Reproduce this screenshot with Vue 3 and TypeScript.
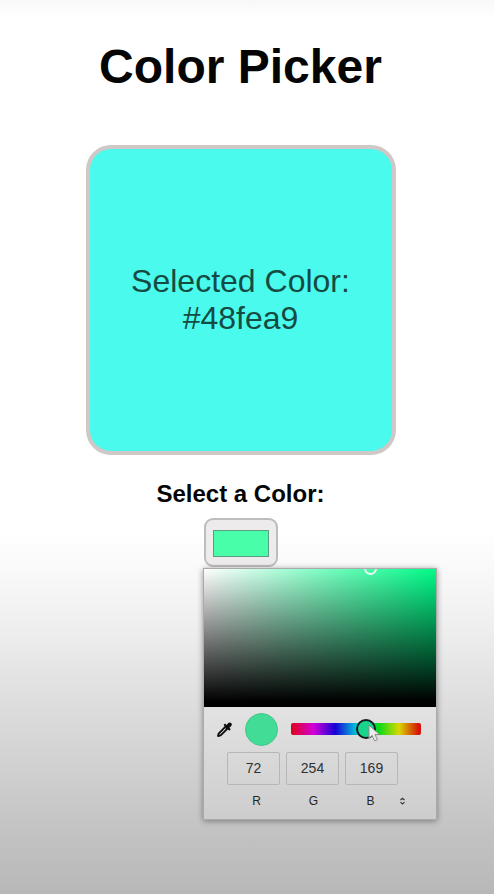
<script setup lang="ts">
import { ref } from 'vue'

interface Channel {
  name: string
  value: number
}

const selected = ref<string>('#48fea9')
const channels = ref<Channel[]>([
  { name: 'R', value: 72 },
  { name: 'G', value: 254 },
  { name: 'B', value: 169 },
])
</script>

<template>
  <main class="page">
    <div class="content">
      <h1 class="title">Color Picker</h1>
      <section class="display">
        <p>Selected Color:<br />{{ selected }}</p>
      </section>
      <h2 class="label">Select a Color:</h2>
      <div class="control">
        <button class="trigger" type="button"><span class="chip"></span></button>
        <div class="popup">
          <div class="palette"><i class="ring"></i></div>
          <div class="tools">
            <svg class="dropper" viewBox="0 0 18 18">
              <path d="M2.2 15.9l.6-2.6 7-7.1 2.1 2.1-7 7z" fill="none" stroke="#0c0c0c" stroke-width="2" stroke-linejoin="round" />
              <path d="M8 4.2l1.5-1.5 1.7 1.5 1.6-1.8q1.6-1.7 3.3-.2 1.6 1.7-.1 3.3L14.2 7.1l1.4 1.6-1.5 1.5z" fill="#0c0c0c" />
            </svg>
            <span class="dot"></span>
            <div class="hue">
              <i class="thumb"></i>
              <svg class="cursor" viewBox="0 0 14 20">
                <path d="M1 1v14.2l3.5-3 2.6 5.7 3-1.3-2.6-5.4h5z" fill="#ececec" stroke="#858585" stroke-width="1" stroke-linejoin="round" />
              </svg>
            </div>
          </div>
          <div class="fields">
            <span v-for="c in channels" :key="c.name" class="field">{{ c.value }}</span>
          </div>
          <div class="names">
            <span v-for="c in channels" :key="c.name" class="name">{{ c.name }}</span>
            <svg class="updown" viewBox="0 0 8 10">
              <path d="M1.5 3.8L4 1.6l2.5 2.2M1.5 6.4L4 8.6l2.5-2.2" fill="none" stroke="#333" stroke-width="1.4" />
            </svg>
          </div>
        </div>
      </div>
    </div>
  </main>
</template>

<style>
body {
  margin: 0;
}
</style>

<style scoped>
* {
  box-sizing: border-box;
}
.page {
  height: 894px;
  overflow: hidden;
  font-family: 'Liberation Sans', Arial, sans-serif;
  color: #050505;
  background: linear-gradient(#f8f8f8 0, #fff 18px, #fff 530px, #fafafa 565px, #eee 630px, #dfdfdf 695px, #cfcfcf 775px, #c2c2c2 835px, #b8b8b8 894px);
}
.content {
  width: 481px;
  padding-top: 39px;
  display: flex;
  flex-direction: column;
  align-items: center;
}
.title {
  margin: 0 0 50px;
  font-size: 48px;
  line-height: 56px;
}
.display {
  width: 310px;
  height: 310px;
  border: 4px solid #cfc8c6;
  border-radius: 25px;
  background: #4afbed;
  display: flex;
  align-items: center;
  justify-content: center;
}
.display p {
  margin: 0;
  font-size: 32px;
  line-height: 37px;
  text-align: center;
  color: #164b43;
}
.label {
  margin: 25px 0 10px;
  font-size: 24px;
  line-height: 28px;
}
.control {
  position: relative;
}
.trigger {
  display: block;
  width: 74px;
  height: 49px;
  padding: 10px 7px 9px;
  border: 2px solid #bdbdbd;
  border-radius: 9px;
  background: #edebec;
}
.chip {
  display: block;
  height: 27px;
  border: 1px solid #5c9c80;
  background: #48fea9;
}
.popup {
  position: absolute;
  top: 50px;
  left: -0.5px;
  width: 234px;
  height: 252px;
  border: 1px solid #a9aaa9;
  background: linear-gradient(#f0f0f0, #e1e1e1 145px, #cdcdcd);
  box-shadow: 0 1px 6px rgba(0, 0, 0, 0.4);
}
.palette {
  position: relative;
  height: 138px;
  overflow: hidden;
  background: linear-gradient(transparent, #000 96%), linear-gradient(90deg, #fff, #00fb88);
}
.ring {
  position: absolute;
  left: 160px;
  top: -7px;
  width: 13px;
  height: 13px;
  border: 2px solid #e8fcf0;
  border-radius: 50%;
}
.tools {
  height: 45px;
  padding-left: 12px;
  display: flex;
  align-items: center;
}
.dropper {
  width: 17px;
  height: 17px;
}
.dot {
  width: 33px;
  height: 33px;
  margin: 0 13px 0 12px;
  border: 1px solid #42c68a;
  border-radius: 50%;
  background: #42dc96;
}
.hue {
  position: relative;
  width: 130px;
  height: 12px;
  margin-bottom: 2px;
  border-radius: 2px;
  background: linear-gradient(90deg, #df0015, #d500d7 17%, #1700d8 34%, #00d0d8 51%, #00da1b 67%, #d9d700 83%, #d41507 98%);
}
.thumb {
  position: absolute;
  left: 65px;
  top: -4px;
  width: 20px;
  height: 20px;
  border: 2px solid #101820;
  border-radius: 50%;
  background: #19d58c;
}
.cursor {
  position: absolute;
  left: 77px;
  top: 1px;
  width: 13px;
  height: 19px;
}
.fields {
  display: flex;
  gap: 6px;
  padding-left: 23px;
}
.field {
  width: 53px;
  height: 33px;
  border: 1px solid #b7b7b7;
  border-radius: 2px;
  font-size: 14px;
  line-height: 31px;
  text-align: center;
  color: #303030;
}
.names {
  display: flex;
  align-items: center;
  padding: 8px 0 0 24px;
}
.name {
  width: 57px;
  font-size: 12px;
  line-height: 16px;
  text-align: center;
  color: #252525;
}
.updown {
  width: 7px;
  height: 8px;
}
</style>
